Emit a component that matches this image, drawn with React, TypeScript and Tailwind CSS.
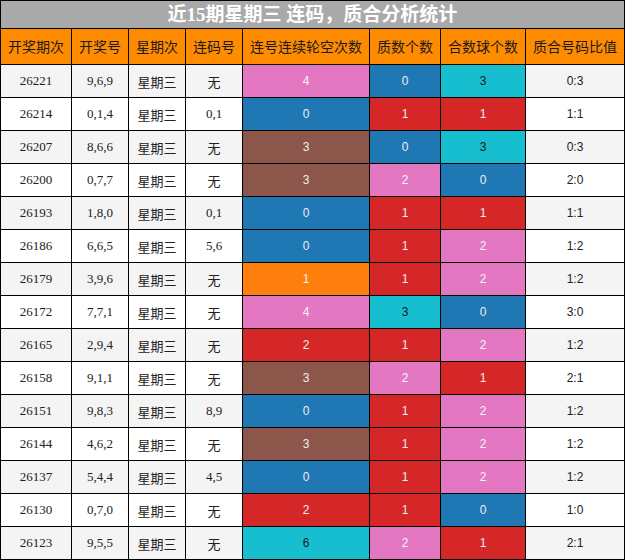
import React from "react";

type Row = [string, string, string, number, number, number, string];

const rows: Row[] = [
  ["26221", "9,6,9", "无", 4, 0, 3, "0:3"],
  ["26214", "0,1,4", "0,1", 0, 1, 1, "1:1"],
  ["26207", "8,6,6", "无", 3, 0, 3, "0:3"],
  ["26200", "0,7,7", "无", 3, 2, 0, "2:0"],
  ["26193", "1,8,0", "0,1", 0, 1, 1, "1:1"],
  ["26186", "6,6,5", "5,6", 0, 1, 2, "1:2"],
  ["26179", "3,9,6", "无", 1, 1, 2, "1:2"],
  ["26172", "7,7,1", "无", 4, 3, 0, "3:0"],
  ["26165", "2,9,4", "无", 2, 1, 2, "1:2"],
  ["26158", "9,1,1", "无", 3, 2, 1, "2:1"],
  ["26151", "9,8,3", "8,9", 0, 1, 2, "1:2"],
  ["26144", "4,6,2", "无", 3, 1, 2, "1:2"],
  ["26137", "5,4,4", "4,5", 0, 1, 2, "1:2"],
  ["26130", "0,7,0", "无", 2, 1, 0, "1:0"],
  ["26123", "9,5,5", "无", 6, 2, 1, "2:1"],
];

const BLUE = "bg-[#1f77b4] text-[#eeeeee]";
const ORANGE = "bg-[#ff7f0e] text-[#f3f3f3]";
const RED = "bg-[#d62728] text-[#eeeeee]";
const BROWN = "bg-[#8c564b] text-[#eeeeee]";
const PINK = "bg-[#e377c2] text-[#f5f5f5]";
const CYAN = "bg-[#17becf] text-[#1a1a1a]";

const lianColor: Record<number, string> = { 0: BLUE, 1: ORANGE, 2: RED, 3: BROWN, 4: PINK, 6: CYAN };
const countColor: Record<number, string> = { 0: BLUE, 1: RED, 2: PINK, 3: CYAN };

const headers = ["开奖期次", "开奖号", "星期次", "连码号", "连号连续轮空次数", "质数个数", "合数球个数", "质合号码比值"];

const grid = "grid grid-cols-[71px_57px_57px_57px_127px_71px_85px_99px]";
const cell = "border-r border-b border-black flex items-center justify-center";
const serif = "font-['Liberation_Serif','Noto_Sans_CJK_SC',serif]";
const sans = "font-['Liberation_Sans','Noto_Sans_CJK_SC',sans-serif]";
const cjk = "font-['Noto_Sans_CJK_SC',sans-serif]";

export default function App() {
  return (
    <div className="w-[625px] h-[560px] bg-white">
      <div className="border-t border-l border-black w-[625px]">
        <div className={`h-[28px] bg-[#a9a9a9] border-r border-b border-black flex items-center justify-center text-white font-bold text-[19px] leading-none ${serif}`}>
          近15期星期三 连码，质合分析统计
        </div>
        <div className={grid}>
          {headers.map((h) => (
            <div key={h} className={`${cell} h-[36px] bg-[#ff8c00] text-[#1a1a1a] text-[14px] ${cjk}`}>
              {h}
            </div>
          ))}
        </div>
        {rows.map((r, i) => {
          const bg = i % 2 === 0 ? "bg-[#f4f4f4]" : "bg-white";
          return (
            <div key={r[0]} className={grid}>
              <div className={`${cell} h-[33px] ${bg} text-[#222] text-[13px] ${serif}`}>{r[0]}</div>
              <div className={`${cell} h-[33px] ${bg} text-[#222] text-[13px] ${serif}`}>{r[1]}</div>
              <div className={`${cell} h-[33px] ${bg} text-[#222] text-[13px] pt-[2px] ${cjk}`}>星期三</div>
              <div className={`${cell} h-[33px] ${bg} text-[#222] text-[13px] ${r[2] === "无" ? `pt-[2px] ${cjk}` : serif}`}>{r[2]}</div>
              <div className={`${cell} h-[33px] ${lianColor[r[3]]} text-[12px] ${sans}`}>{r[3]}</div>
              <div className={`${cell} h-[33px] ${countColor[r[4]]} text-[12px] ${sans}`}>{r[4]}</div>
              <div className={`${cell} h-[33px] ${countColor[r[5]]} text-[12px] ${sans}`}>{r[5]}</div>
              <div className={`${cell} h-[33px] ${bg} text-[#222] text-[12px] ${sans}`}>{r[6]}</div>
            </div>
          );
        })}
      </div>
    </div>
  );
}
